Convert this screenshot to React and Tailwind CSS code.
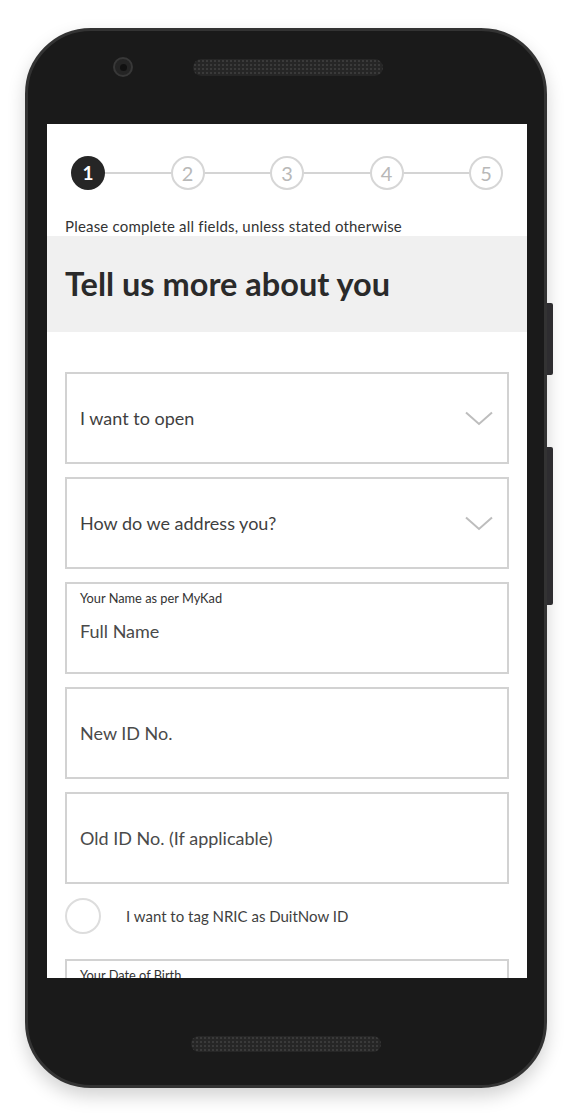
import { ChevronDown } from "lucide-react";

const font = { fontFamily: "Lato, 'Noto Sans', sans-serif" };

function Step({ n, active }) {
  if (active) {
    return (
      <div className="flex h-[34px] w-[34px] shrink-0 items-center justify-center rounded-full bg-[#262626] text-[19px] font-bold text-white">
        {n}
      </div>
    );
  }
  return (
    <div className="flex h-[34px] w-[34px] shrink-0 items-center justify-center rounded-full border-2 border-[#d6d6d6] text-[20px] text-[#b8b8b8]">
      {n}
    </div>
  );
}

function Stepper() {
  const steps = [1, 2, 3, 4, 5];
  return (
    <div className="flex items-center px-[24px] pt-[32px]">
      {steps.map((n, i) => (
        <div key={n} className={i === 0 ? "flex items-center" : "flex flex-1 items-center"}>
          {i > 0 && <div className="h-[1.5px] flex-1 bg-[#d4d4d4]"></div>}
          <Step n={n} active={i === 0} />
        </div>
      ))}
    </div>
  );
}

function SelectField({ label }) {
  return (
    <div className="flex h-[92px] items-center justify-between border-2 border-[#d2d2d2] pl-[13px] pr-[14px]">
      <span className="text-[18px] text-[#3f3f3f]">{label}</span>
      <svg width="28" height="15" viewBox="0 0 28 15" fill="none">
        <path d="M1 1.5L14 13L27 1.5" stroke="#bdbdbd" strokeWidth="2" />
      </svg>
    </div>
  );
}

function TextField({ label, placeholder, cut }) {
  return (
    <div
      className={`flex flex-col border-2 border-[#d2d2d2] pl-[13px] ${
        cut ? "h-[40px] border-b-0" : "h-[92px]"
      } ${label ? "pt-[4px]" : "justify-center"}`}
    >
      {label && <span className="text-[12.8px] leading-[20px] text-[#333333]">{label}</span>}
      {placeholder && (
        <span className={`text-[18px] text-[#4a4a4a] ${label ? "mt-[10px]" : ""}`}>{placeholder}</span>
      )}
    </div>
  );
}

export default function App() {
  return (
    <div className="min-h-screen bg-white pt-[28px] pl-[25px]" style={font}>
      <div className="relative h-[1060px] w-[522px] rounded-[66px] border-[3px] border-[#333333] bg-[#1a1a1a] px-[19px] shadow-[0_8px_18px_rgba(0,0,0,0.18)]">
        {/* side buttons */}
        <div className="absolute left-[519px] top-[272px] h-[72px] w-[6px] rounded-r-[2px] bg-[#2e2d30]"></div>
        <div className="absolute left-[519px] top-[416px] h-[158px] w-[6px] rounded-r-[2px] bg-[#2e2d30]"></div>

        {/* top bezel */}
        <div className="flex h-[93px] items-center pb-[21px] pl-[66px]">
          <div className="flex h-[20px] w-[20px] items-center justify-center rounded-full border-2 border-[#383838] bg-[#242424]">
            <div className="h-[7px] w-[7px] rounded-full bg-[#111111]"></div>
          </div>
          <div className="ml-[60px] h-[17px] w-[190px] rounded-full bg-[#262626] bg-[radial-gradient(circle,#3a3a3a_1px,transparent_1.2px)] bg-[length:4px_4px]"></div>
        </div>

        {/* screen */}
        <div className="h-[854px] w-[480px] overflow-hidden bg-white">
          <Stepper />
          <p className="mt-[26px] px-[18px] text-[15px] leading-[20px] tracking-[0.2px] text-[#333333]">
            Please complete all fields, unless stated otherwise
          </p>
          <div className="flex h-[96px] items-center bg-[#f0f0f0] px-[18px]">
            <h1 className="text-[32.5px] font-bold leading-none text-[#2a2a2a]">Tell us more about you</h1>
          </div>

          <div className="mt-[40px] flex flex-col gap-[13px] px-[18px]">
            <SelectField label="I want to open" />
            <SelectField label="How do we address you?" />
            <TextField label="Your Name as per MyKad" placeholder="Full Name" />
            <TextField placeholder="New ID No." />
            <TextField placeholder="Old ID No. (If applicable)" />
          </div>

          <div className="mt-[14px] flex items-center px-[18px]">
            <div className="h-[36px] w-[36px] rounded-full border-2 border-[#dddddd]"></div>
            <span className="ml-[25px] text-[15px] text-[#3f3f3f]">I want to tag NRIC as DuitNow ID</span>
          </div>

          <div className="mt-[25px] px-[18px]">
            <TextField label="Your Date of Birth" cut />
          </div>
        </div>

        {/* bottom bezel */}
        <div className="flex justify-center pt-[58px]">
          <div className="h-[16px] w-[190px] rounded-full bg-[#262626] bg-[radial-gradient(circle,#3a3a3a_1px,transparent_1.2px)] bg-[length:4px_4px]"></div>
        </div>
      </div>
    </div>
  );
}
